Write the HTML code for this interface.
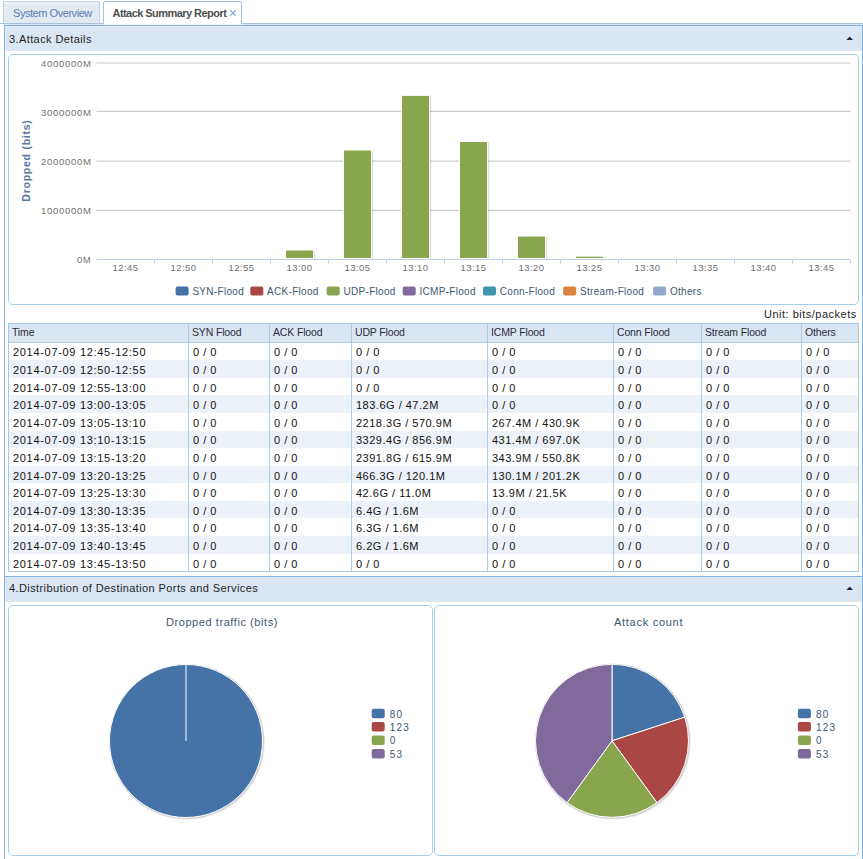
<!DOCTYPE html><html><head><meta charset="utf-8"><style>
*{margin:0;padding:0;box-sizing:border-box}
html,body{width:863px;height:859px;overflow:hidden;background:#fff;font-family:"Liberation Sans",sans-serif;position:relative}
.a{position:absolute}
.t{position:absolute;white-space:nowrap}
</style></head><body><div class="a" style="left:0;top:23px;width:863px;height:1px;background:#a6c2de"></div>
<div class="a" style="left:4px;top:24px;width:859px;height:1px;background:#dde4eb"></div>
<div class="a" style="left:104px;top:24px;width:138px;height:1px;background:#f4f7fa"></div>
<div class="a" style="left:3px;top:1px;width:97px;height:22px;background:linear-gradient(#edf2f7,#e3eaf1 4px,#e2e9f0);border:1px solid #bcd2e6;border-bottom:none;border-top-color:#c5d8ea"></div>
<div class="t" style="left:13px;top:7px;font-size:11px;color:#5a80b8;letter-spacing:-0.45px">System Overview</div>
<div class="a" style="left:103px;top:1px;width:139px;height:23px;background:#fff;border:1px solid #a3c2e2;border-bottom:none;border-radius:2px 2px 0 0"></div>
<div class="t" style="left:112.5px;top:7px;font-size:11px;font-weight:bold;color:#505050;letter-spacing:-0.55px">Attack Summary Report</div>
<div class="t" style="left:228.8px;top:4.6px;font-size:14px;color:#7fa3cf">&#215;</div>
<div class="a" style="left:4px;top:25px;width:859px;height:840px;border:1px solid #82b2e0;border-bottom:none"></div>
<div class="a" style="left:5px;top:26px;width:857px;height:25px;background:linear-gradient(#e3ebf6,#dae6f3 1.5px,#dae6f3 23px,#dfe9f5)"></div>
<div class="t" style="left:9px;top:33px;font-size:11px;color:#1f1f1f;letter-spacing:0.4px">3.Attack Details</div>
<svg class="a" style="left:846px;top:36px" width="8" height="5"><path d="M0.5 4 L3.75 0.5 L7 4 Z" fill="#15223d"/></svg>
<div class="a" style="left:8px;top:54px;width:851px;height:251px;border:1px solid #a8cde8;border-radius:5px"></div>
<svg class="a" style="left:0;top:0" width="863" height="310" font-family="Liberation Sans, sans-serif"><rect x="96.5" y="62.50" width="754.0" height="1" fill="#c4c4c4"/><rect x="96.5" y="110.90" width="754.0" height="1" fill="#c4c4c4"/><rect x="96.5" y="160.60" width="754.0" height="1" fill="#c4c4c4"/><rect x="96.5" y="209.90" width="754.0" height="1" fill="#c4c4c4"/><text x="91.5" y="66.5" text-anchor="end" font-size="9.5" fill="#707070" letter-spacing="0.7">4000000M</text><text x="91.5" y="115.6" text-anchor="end" font-size="9.5" fill="#707070" letter-spacing="0.7">3000000M</text><text x="91.5" y="164.8" text-anchor="end" font-size="9.5" fill="#707070" letter-spacing="0.7">2000000M</text><text x="91.5" y="213.9" text-anchor="end" font-size="9.5" fill="#707070" letter-spacing="0.7">1000000M</text><text x="91.5" y="263.0" text-anchor="end" font-size="9.5" fill="#707070" letter-spacing="0.7">0M</text><rect x="285.0" y="249.5" width="29" height="9.0" fill="#fff"/><rect x="314.0" y="250.5" width="1.2" height="8.0" fill="#000" opacity="0.12"/><rect x="286.0" y="250.5" width="27" height="7.5" fill="#89a54e"/><rect x="343.0" y="149.5" width="29" height="109.0" fill="#fff"/><rect x="372.0" y="150.5" width="1.2" height="108.0" fill="#000" opacity="0.12"/><rect x="344.0" y="150.5" width="27" height="107.5" fill="#89a54e"/><rect x="401.0" y="94.9" width="29" height="163.6" fill="#fff"/><rect x="430.0" y="95.9" width="1.2" height="162.6" fill="#000" opacity="0.12"/><rect x="402.0" y="95.9" width="27" height="162.1" fill="#89a54e"/><rect x="459.0" y="141.0" width="29" height="117.5" fill="#fff"/><rect x="488.0" y="142.0" width="1.2" height="116.5" fill="#000" opacity="0.12"/><rect x="460.0" y="142.0" width="27" height="116.0" fill="#89a54e"/><rect x="517.0" y="235.6" width="29" height="22.9" fill="#fff"/><rect x="546.0" y="236.6" width="1.2" height="21.9" fill="#000" opacity="0.12"/><rect x="518.0" y="236.6" width="27" height="21.4" fill="#89a54e"/><rect x="575.0" y="255.7" width="29" height="2.8" fill="#fff"/><rect x="604.0" y="256.7" width="1.2" height="1.8" fill="#000" opacity="0.12"/><rect x="576.0" y="256.7" width="27" height="1.3" fill="#89a54e"/><rect x="96.5" y="259" width="754.0" height="1" fill="#c0d0e0"/><rect x="154" y="260" width="1" height="3.5" fill="#c0d0e0"/><rect x="212" y="260" width="1" height="3.5" fill="#c0d0e0"/><rect x="270" y="260" width="1" height="3.5" fill="#c0d0e0"/><rect x="328" y="260" width="1" height="3.5" fill="#c0d0e0"/><rect x="386" y="260" width="1" height="3.5" fill="#c0d0e0"/><rect x="444" y="260" width="1" height="3.5" fill="#c0d0e0"/><rect x="502" y="260" width="1" height="3.5" fill="#c0d0e0"/><rect x="560" y="260" width="1" height="3.5" fill="#c0d0e0"/><rect x="618" y="260" width="1" height="3.5" fill="#c0d0e0"/><rect x="676" y="260" width="1" height="3.5" fill="#c0d0e0"/><rect x="734" y="260" width="1" height="3.5" fill="#c0d0e0"/><rect x="792" y="260" width="1" height="3.5" fill="#c0d0e0"/><rect x="850" y="260" width="1" height="3.5" fill="#c0d0e0"/><text x="125.5" y="271" text-anchor="middle" font-size="9.5" fill="#707070" letter-spacing="0.4">12:45</text><text x="183.5" y="271" text-anchor="middle" font-size="9.5" fill="#707070" letter-spacing="0.4">12:50</text><text x="241.5" y="271" text-anchor="middle" font-size="9.5" fill="#707070" letter-spacing="0.4">12:55</text><text x="299.5" y="271" text-anchor="middle" font-size="9.5" fill="#707070" letter-spacing="0.4">13:00</text><text x="357.5" y="271" text-anchor="middle" font-size="9.5" fill="#707070" letter-spacing="0.4">13:05</text><text x="415.5" y="271" text-anchor="middle" font-size="9.5" fill="#707070" letter-spacing="0.4">13:10</text><text x="473.5" y="271" text-anchor="middle" font-size="9.5" fill="#707070" letter-spacing="0.4">13:15</text><text x="531.5" y="271" text-anchor="middle" font-size="9.5" fill="#707070" letter-spacing="0.4">13:20</text><text x="589.5" y="271" text-anchor="middle" font-size="9.5" fill="#707070" letter-spacing="0.4">13:25</text><text x="647.5" y="271" text-anchor="middle" font-size="9.5" fill="#707070" letter-spacing="0.4">13:30</text><text x="705.5" y="271" text-anchor="middle" font-size="9.5" fill="#707070" letter-spacing="0.4">13:35</text><text x="763.5" y="271" text-anchor="middle" font-size="9.5" fill="#707070" letter-spacing="0.4">13:40</text><text x="821.5" y="271" text-anchor="middle" font-size="9.5" fill="#707070" letter-spacing="0.4">13:45</text><text transform="translate(30,160.5) rotate(-90)" text-anchor="middle" font-size="10.5" font-weight="bold" fill="#56789e" letter-spacing="0.75">Dropped (bits)</text><rect x="175.6" y="286.5" width="13" height="9" rx="2" fill="#4572a7"/><text x="192.4" y="294.8" font-size="10" fill="#3e576f" letter-spacing="0.3">SYN-Flood</text><rect x="250.3" y="286.5" width="13" height="9" rx="2" fill="#aa4643"/><text x="267.1" y="294.8" font-size="10" fill="#3e576f" letter-spacing="0.3">ACK-Flood</text><rect x="326.7" y="286.5" width="13" height="9" rx="2" fill="#89a54e"/><text x="343.5" y="294.8" font-size="10" fill="#3e576f" letter-spacing="0.3">UDP-Flood</text><rect x="402.7" y="286.5" width="13" height="9" rx="2" fill="#80699b"/><text x="419.5" y="294.8" font-size="10" fill="#3e576f" letter-spacing="0.3">ICMP-Flood</text><rect x="483.0" y="286.5" width="13" height="9" rx="2" fill="#3d96ae"/><text x="499.8" y="294.8" font-size="10" fill="#3e576f" letter-spacing="0.3">Conn-Flood</text><rect x="563.2" y="286.5" width="13" height="9" rx="2" fill="#db843d"/><text x="580.0" y="294.8" font-size="10" fill="#3e576f" letter-spacing="0.3">Stream-Flood</text><rect x="653.1" y="286.5" width="13" height="9" rx="2" fill="#92a8cd"/><text x="669.9" y="294.8" font-size="10" fill="#3e576f" letter-spacing="0.3">Others</text></svg>
<div class="t" style="left:764px;top:308px;font-size:11px;color:#1f1f1f;letter-spacing:0.5px">Unit: bits/packets</div>
<div class="a" style="left:8px;top:323px;width:851px;height:249.30px;border:1px solid #a9c8e6;"></div>
<div class="a" style="left:9px;top:324px;width:849px;height:18.50px;background:#dae6f3;border-bottom:1px solid #b4cde6"></div>
<div class="a" style="left:9px;top:342.50px;width:849px;height:17.60px;background:#fff"></div>
<div class="a" style="left:9px;top:360.10px;width:849px;height:17.60px;background:#edf2f8"></div>
<div class="a" style="left:9px;top:377.70px;width:849px;height:17.60px;background:#fff"></div>
<div class="a" style="left:9px;top:395.30px;width:849px;height:17.60px;background:#edf2f8"></div>
<div class="a" style="left:9px;top:412.90px;width:849px;height:17.60px;background:#fff"></div>
<div class="a" style="left:9px;top:430.50px;width:849px;height:17.60px;background:#edf2f8"></div>
<div class="a" style="left:9px;top:448.10px;width:849px;height:17.60px;background:#fff"></div>
<div class="a" style="left:9px;top:465.70px;width:849px;height:17.60px;background:#edf2f8"></div>
<div class="a" style="left:9px;top:483.30px;width:849px;height:17.60px;background:#fff"></div>
<div class="a" style="left:9px;top:500.90px;width:849px;height:17.60px;background:#edf2f8"></div>
<div class="a" style="left:9px;top:518.50px;width:849px;height:17.60px;background:#fff"></div>
<div class="a" style="left:9px;top:536.10px;width:849px;height:17.60px;background:#edf2f8"></div>
<div class="a" style="left:9px;top:553.70px;width:849px;height:17.60px;background:#fff"></div>
<div class="a" style="left:188px;top:324px;width:1px;height:247.30px;background:#aecde8"></div>
<div class="a" style="left:269px;top:324px;width:1px;height:247.30px;background:#aecde8"></div>
<div class="a" style="left:351px;top:324px;width:1px;height:247.30px;background:#aecde8"></div>
<div class="a" style="left:487px;top:324px;width:1px;height:247.30px;background:#aecde8"></div>
<div class="a" style="left:613px;top:324px;width:1px;height:247.30px;background:#aecde8"></div>
<div class="a" style="left:701px;top:324px;width:1px;height:247.30px;background:#aecde8"></div>
<div class="a" style="left:801px;top:324px;width:1px;height:247.30px;background:#aecde8"></div>
<div class="t" style="left:12px;top:325.8px;font-size:10.5px;color:#2b2b3b;letter-spacing:-0.15px">Time</div>
<div class="t" style="left:192px;top:325.8px;font-size:10.5px;color:#2b2b3b;letter-spacing:-0.15px">SYN Flood</div>
<div class="t" style="left:273px;top:325.8px;font-size:10.5px;color:#2b2b3b;letter-spacing:-0.15px">ACK Flood</div>
<div class="t" style="left:355px;top:325.8px;font-size:10.5px;color:#2b2b3b;letter-spacing:-0.15px">UDP Flood</div>
<div class="t" style="left:491px;top:325.8px;font-size:10.5px;color:#2b2b3b;letter-spacing:-0.15px">ICMP Flood</div>
<div class="t" style="left:617px;top:325.8px;font-size:10.5px;color:#2b2b3b;letter-spacing:-0.15px">Conn Flood</div>
<div class="t" style="left:705px;top:325.8px;font-size:10.5px;color:#2b2b3b;letter-spacing:-0.15px">Stream Flood</div>
<div class="t" style="left:805px;top:325.8px;font-size:10.5px;color:#2b2b3b;letter-spacing:-0.15px">Others</div>
<div class="t" style="left:13px;top:346.30px;font-size:11px;color:#111;letter-spacing:0.69px">2014-07-09 12:45-12:50</div>
<div class="t" style="left:193px;top:346.30px;font-size:11px;color:#111;letter-spacing:0.5px">0 / 0</div>
<div class="t" style="left:274px;top:346.30px;font-size:11px;color:#111;letter-spacing:0.5px">0 / 0</div>
<div class="t" style="left:356px;top:346.30px;font-size:11px;color:#111;letter-spacing:0.5px">0 / 0</div>
<div class="t" style="left:492px;top:346.30px;font-size:11px;color:#111;letter-spacing:0.5px">0 / 0</div>
<div class="t" style="left:618px;top:346.30px;font-size:11px;color:#111;letter-spacing:0.5px">0 / 0</div>
<div class="t" style="left:706px;top:346.30px;font-size:11px;color:#111;letter-spacing:0.5px">0 / 0</div>
<div class="t" style="left:806px;top:346.30px;font-size:11px;color:#111;letter-spacing:0.5px">0 / 0</div>
<div class="t" style="left:13px;top:363.90px;font-size:11px;color:#111;letter-spacing:0.69px">2014-07-09 12:50-12:55</div>
<div class="t" style="left:193px;top:363.90px;font-size:11px;color:#111;letter-spacing:0.5px">0 / 0</div>
<div class="t" style="left:274px;top:363.90px;font-size:11px;color:#111;letter-spacing:0.5px">0 / 0</div>
<div class="t" style="left:356px;top:363.90px;font-size:11px;color:#111;letter-spacing:0.5px">0 / 0</div>
<div class="t" style="left:492px;top:363.90px;font-size:11px;color:#111;letter-spacing:0.5px">0 / 0</div>
<div class="t" style="left:618px;top:363.90px;font-size:11px;color:#111;letter-spacing:0.5px">0 / 0</div>
<div class="t" style="left:706px;top:363.90px;font-size:11px;color:#111;letter-spacing:0.5px">0 / 0</div>
<div class="t" style="left:806px;top:363.90px;font-size:11px;color:#111;letter-spacing:0.5px">0 / 0</div>
<div class="t" style="left:13px;top:381.50px;font-size:11px;color:#111;letter-spacing:0.69px">2014-07-09 12:55-13:00</div>
<div class="t" style="left:193px;top:381.50px;font-size:11px;color:#111;letter-spacing:0.5px">0 / 0</div>
<div class="t" style="left:274px;top:381.50px;font-size:11px;color:#111;letter-spacing:0.5px">0 / 0</div>
<div class="t" style="left:356px;top:381.50px;font-size:11px;color:#111;letter-spacing:0.5px">0 / 0</div>
<div class="t" style="left:492px;top:381.50px;font-size:11px;color:#111;letter-spacing:0.5px">0 / 0</div>
<div class="t" style="left:618px;top:381.50px;font-size:11px;color:#111;letter-spacing:0.5px">0 / 0</div>
<div class="t" style="left:706px;top:381.50px;font-size:11px;color:#111;letter-spacing:0.5px">0 / 0</div>
<div class="t" style="left:806px;top:381.50px;font-size:11px;color:#111;letter-spacing:0.5px">0 / 0</div>
<div class="t" style="left:13px;top:399.10px;font-size:11px;color:#111;letter-spacing:0.69px">2014-07-09 13:00-13:05</div>
<div class="t" style="left:193px;top:399.10px;font-size:11px;color:#111;letter-spacing:0.5px">0 / 0</div>
<div class="t" style="left:274px;top:399.10px;font-size:11px;color:#111;letter-spacing:0.5px">0 / 0</div>
<div class="t" style="left:356px;top:399.10px;font-size:11px;color:#111;letter-spacing:0.5px">183.6G / 47.2M</div>
<div class="t" style="left:492px;top:399.10px;font-size:11px;color:#111;letter-spacing:0.5px">0 / 0</div>
<div class="t" style="left:618px;top:399.10px;font-size:11px;color:#111;letter-spacing:0.5px">0 / 0</div>
<div class="t" style="left:706px;top:399.10px;font-size:11px;color:#111;letter-spacing:0.5px">0 / 0</div>
<div class="t" style="left:806px;top:399.10px;font-size:11px;color:#111;letter-spacing:0.5px">0 / 0</div>
<div class="t" style="left:13px;top:416.70px;font-size:11px;color:#111;letter-spacing:0.69px">2014-07-09 13:05-13:10</div>
<div class="t" style="left:193px;top:416.70px;font-size:11px;color:#111;letter-spacing:0.5px">0 / 0</div>
<div class="t" style="left:274px;top:416.70px;font-size:11px;color:#111;letter-spacing:0.5px">0 / 0</div>
<div class="t" style="left:356px;top:416.70px;font-size:11px;color:#111;letter-spacing:0.5px">2218.3G / 570.9M</div>
<div class="t" style="left:492px;top:416.70px;font-size:11px;color:#111;letter-spacing:0.5px">267.4M / 430.9K</div>
<div class="t" style="left:618px;top:416.70px;font-size:11px;color:#111;letter-spacing:0.5px">0 / 0</div>
<div class="t" style="left:706px;top:416.70px;font-size:11px;color:#111;letter-spacing:0.5px">0 / 0</div>
<div class="t" style="left:806px;top:416.70px;font-size:11px;color:#111;letter-spacing:0.5px">0 / 0</div>
<div class="t" style="left:13px;top:434.30px;font-size:11px;color:#111;letter-spacing:0.69px">2014-07-09 13:10-13:15</div>
<div class="t" style="left:193px;top:434.30px;font-size:11px;color:#111;letter-spacing:0.5px">0 / 0</div>
<div class="t" style="left:274px;top:434.30px;font-size:11px;color:#111;letter-spacing:0.5px">0 / 0</div>
<div class="t" style="left:356px;top:434.30px;font-size:11px;color:#111;letter-spacing:0.5px">3329.4G / 856.9M</div>
<div class="t" style="left:492px;top:434.30px;font-size:11px;color:#111;letter-spacing:0.5px">431.4M / 697.0K</div>
<div class="t" style="left:618px;top:434.30px;font-size:11px;color:#111;letter-spacing:0.5px">0 / 0</div>
<div class="t" style="left:706px;top:434.30px;font-size:11px;color:#111;letter-spacing:0.5px">0 / 0</div>
<div class="t" style="left:806px;top:434.30px;font-size:11px;color:#111;letter-spacing:0.5px">0 / 0</div>
<div class="t" style="left:13px;top:451.90px;font-size:11px;color:#111;letter-spacing:0.69px">2014-07-09 13:15-13:20</div>
<div class="t" style="left:193px;top:451.90px;font-size:11px;color:#111;letter-spacing:0.5px">0 / 0</div>
<div class="t" style="left:274px;top:451.90px;font-size:11px;color:#111;letter-spacing:0.5px">0 / 0</div>
<div class="t" style="left:356px;top:451.90px;font-size:11px;color:#111;letter-spacing:0.5px">2391.8G / 615.9M</div>
<div class="t" style="left:492px;top:451.90px;font-size:11px;color:#111;letter-spacing:0.5px">343.9M / 550.8K</div>
<div class="t" style="left:618px;top:451.90px;font-size:11px;color:#111;letter-spacing:0.5px">0 / 0</div>
<div class="t" style="left:706px;top:451.90px;font-size:11px;color:#111;letter-spacing:0.5px">0 / 0</div>
<div class="t" style="left:806px;top:451.90px;font-size:11px;color:#111;letter-spacing:0.5px">0 / 0</div>
<div class="t" style="left:13px;top:469.50px;font-size:11px;color:#111;letter-spacing:0.69px">2014-07-09 13:20-13:25</div>
<div class="t" style="left:193px;top:469.50px;font-size:11px;color:#111;letter-spacing:0.5px">0 / 0</div>
<div class="t" style="left:274px;top:469.50px;font-size:11px;color:#111;letter-spacing:0.5px">0 / 0</div>
<div class="t" style="left:356px;top:469.50px;font-size:11px;color:#111;letter-spacing:0.5px">466.3G / 120.1M</div>
<div class="t" style="left:492px;top:469.50px;font-size:11px;color:#111;letter-spacing:0.5px">130.1M / 201.2K</div>
<div class="t" style="left:618px;top:469.50px;font-size:11px;color:#111;letter-spacing:0.5px">0 / 0</div>
<div class="t" style="left:706px;top:469.50px;font-size:11px;color:#111;letter-spacing:0.5px">0 / 0</div>
<div class="t" style="left:806px;top:469.50px;font-size:11px;color:#111;letter-spacing:0.5px">0 / 0</div>
<div class="t" style="left:13px;top:487.10px;font-size:11px;color:#111;letter-spacing:0.69px">2014-07-09 13:25-13:30</div>
<div class="t" style="left:193px;top:487.10px;font-size:11px;color:#111;letter-spacing:0.5px">0 / 0</div>
<div class="t" style="left:274px;top:487.10px;font-size:11px;color:#111;letter-spacing:0.5px">0 / 0</div>
<div class="t" style="left:356px;top:487.10px;font-size:11px;color:#111;letter-spacing:0.5px">42.6G / 11.0M</div>
<div class="t" style="left:492px;top:487.10px;font-size:11px;color:#111;letter-spacing:0.5px">13.9M / 21.5K</div>
<div class="t" style="left:618px;top:487.10px;font-size:11px;color:#111;letter-spacing:0.5px">0 / 0</div>
<div class="t" style="left:706px;top:487.10px;font-size:11px;color:#111;letter-spacing:0.5px">0 / 0</div>
<div class="t" style="left:806px;top:487.10px;font-size:11px;color:#111;letter-spacing:0.5px">0 / 0</div>
<div class="t" style="left:13px;top:504.70px;font-size:11px;color:#111;letter-spacing:0.69px">2014-07-09 13:30-13:35</div>
<div class="t" style="left:193px;top:504.70px;font-size:11px;color:#111;letter-spacing:0.5px">0 / 0</div>
<div class="t" style="left:274px;top:504.70px;font-size:11px;color:#111;letter-spacing:0.5px">0 / 0</div>
<div class="t" style="left:356px;top:504.70px;font-size:11px;color:#111;letter-spacing:0.5px">6.4G / 1.6M</div>
<div class="t" style="left:492px;top:504.70px;font-size:11px;color:#111;letter-spacing:0.5px">0 / 0</div>
<div class="t" style="left:618px;top:504.70px;font-size:11px;color:#111;letter-spacing:0.5px">0 / 0</div>
<div class="t" style="left:706px;top:504.70px;font-size:11px;color:#111;letter-spacing:0.5px">0 / 0</div>
<div class="t" style="left:806px;top:504.70px;font-size:11px;color:#111;letter-spacing:0.5px">0 / 0</div>
<div class="t" style="left:13px;top:522.30px;font-size:11px;color:#111;letter-spacing:0.69px">2014-07-09 13:35-13:40</div>
<div class="t" style="left:193px;top:522.30px;font-size:11px;color:#111;letter-spacing:0.5px">0 / 0</div>
<div class="t" style="left:274px;top:522.30px;font-size:11px;color:#111;letter-spacing:0.5px">0 / 0</div>
<div class="t" style="left:356px;top:522.30px;font-size:11px;color:#111;letter-spacing:0.5px">6.3G / 1.6M</div>
<div class="t" style="left:492px;top:522.30px;font-size:11px;color:#111;letter-spacing:0.5px">0 / 0</div>
<div class="t" style="left:618px;top:522.30px;font-size:11px;color:#111;letter-spacing:0.5px">0 / 0</div>
<div class="t" style="left:706px;top:522.30px;font-size:11px;color:#111;letter-spacing:0.5px">0 / 0</div>
<div class="t" style="left:806px;top:522.30px;font-size:11px;color:#111;letter-spacing:0.5px">0 / 0</div>
<div class="t" style="left:13px;top:539.90px;font-size:11px;color:#111;letter-spacing:0.69px">2014-07-09 13:40-13:45</div>
<div class="t" style="left:193px;top:539.90px;font-size:11px;color:#111;letter-spacing:0.5px">0 / 0</div>
<div class="t" style="left:274px;top:539.90px;font-size:11px;color:#111;letter-spacing:0.5px">0 / 0</div>
<div class="t" style="left:356px;top:539.90px;font-size:11px;color:#111;letter-spacing:0.5px">6.2G / 1.6M</div>
<div class="t" style="left:492px;top:539.90px;font-size:11px;color:#111;letter-spacing:0.5px">0 / 0</div>
<div class="t" style="left:618px;top:539.90px;font-size:11px;color:#111;letter-spacing:0.5px">0 / 0</div>
<div class="t" style="left:706px;top:539.90px;font-size:11px;color:#111;letter-spacing:0.5px">0 / 0</div>
<div class="t" style="left:806px;top:539.90px;font-size:11px;color:#111;letter-spacing:0.5px">0 / 0</div>
<div class="t" style="left:13px;top:557.50px;font-size:11px;color:#111;letter-spacing:0.69px">2014-07-09 13:45-13:50</div>
<div class="t" style="left:193px;top:557.50px;font-size:11px;color:#111;letter-spacing:0.5px">0 / 0</div>
<div class="t" style="left:274px;top:557.50px;font-size:11px;color:#111;letter-spacing:0.5px">0 / 0</div>
<div class="t" style="left:356px;top:557.50px;font-size:11px;color:#111;letter-spacing:0.5px">0 / 0</div>
<div class="t" style="left:492px;top:557.50px;font-size:11px;color:#111;letter-spacing:0.5px">0 / 0</div>
<div class="t" style="left:618px;top:557.50px;font-size:11px;color:#111;letter-spacing:0.5px">0 / 0</div>
<div class="t" style="left:706px;top:557.50px;font-size:11px;color:#111;letter-spacing:0.5px">0 / 0</div>
<div class="t" style="left:806px;top:557.50px;font-size:11px;color:#111;letter-spacing:0.5px">0 / 0</div>
<div class="a" style="left:5px;top:576px;width:857px;height:1px;background:#82b2e0"></div>
<div class="a" style="left:5px;top:577px;width:857px;height:25px;background:linear-gradient(#e3ebf6,#dae6f3 1.5px,#dae6f3 23px,#dfe9f5)"></div>
<div class="t" style="left:9px;top:582.4px;font-size:11px;color:#1f1f1f;letter-spacing:0.4px">4.Distribution of Destination Ports and Services</div>
<svg class="a" style="left:846px;top:586px" width="8" height="5"><path d="M0.5 4 L3.75 0.5 L7 4 Z" fill="#15223d"/></svg>
<div class="a" style="left:8px;top:605px;width:425px;height:251px;border:1px solid #a8cde8;border-radius:5px"></div>
<div class="a" style="left:434px;top:605px;width:425px;height:251px;border:1px solid #a8cde8;border-radius:5px"></div>
<div class="t" style="left:166px;top:616px;font-size:11px;color:#3e576f;letter-spacing:0.57px">Dropped traffic (bits)</div>
<div class="t" style="left:614px;top:616px;font-size:11px;color:#3e576f;letter-spacing:0.72px">Attack count</div>
<svg class="a" style="left:0;top:600px" width="863" height="259" font-family="Liberation Sans, sans-serif">
<circle cx="186.8" cy="141.8" r="78.0" fill="#000" opacity="0.07"/><circle cx="186.5" cy="141.5" r="77.5" fill="#000" opacity="0.12"/><circle cx="186.0" cy="141.0" r="76.5" fill="#4572a7" stroke="#fff" stroke-width="1"/><line x1="186.0" y1="64.5" x2="186.0" y2="141.0" stroke="#fff" stroke-width="1"/>
<circle cx="612.8" cy="141.60000000000002" r="78.0" fill="#000" opacity="0.07"/><circle cx="612.5" cy="141.3" r="77.5" fill="#000" opacity="0.12"/><path d="M612.0 140.8 L612.00 64.30 A76.5 76.5 0 0 1 684.76 117.16 Z" fill="#4572a7" stroke="#fff" stroke-width="1" stroke-linejoin="round"/><path d="M612.0 140.8 L684.76 117.16 A76.5 76.5 0 0 1 656.97 202.69 Z" fill="#aa4643" stroke="#fff" stroke-width="1" stroke-linejoin="round"/><path d="M612.0 140.8 L656.97 202.69 A76.5 76.5 0 0 1 567.03 202.69 Z" fill="#89a54e" stroke="#fff" stroke-width="1" stroke-linejoin="round"/><path d="M612.0 140.8 L567.03 202.69 A76.5 76.5 0 0 1 612.00 64.30 Z" fill="#80699b" stroke="#fff" stroke-width="1" stroke-linejoin="round"/>
<rect x="371.7" y="108.7" width="13" height="9.5" rx="2" fill="#4572a7"/>
<text x="389.7" y="117.5" font-size="10" fill="#3e576f" letter-spacing="1.2">80</text>
<rect x="371.7" y="122.1" width="13" height="9.5" rx="2" fill="#aa4643"/>
<text x="389.7" y="130.9" font-size="10" fill="#3e576f" letter-spacing="1.2">123</text>
<rect x="371.7" y="135.5" width="13" height="9.5" rx="2" fill="#89a54e"/>
<text x="389.7" y="144.3" font-size="10" fill="#3e576f" letter-spacing="1.2">0</text>
<rect x="371.7" y="148.9" width="13" height="9.5" rx="2" fill="#80699b"/>
<text x="389.7" y="157.7" font-size="10" fill="#3e576f" letter-spacing="1.2">53</text>
<rect x="797.9" y="108.7" width="13" height="9.5" rx="2" fill="#4572a7"/>
<text x="815.9" y="117.5" font-size="10" fill="#3e576f" letter-spacing="1.2">80</text>
<rect x="797.9" y="122.1" width="13" height="9.5" rx="2" fill="#aa4643"/>
<text x="815.9" y="130.9" font-size="10" fill="#3e576f" letter-spacing="1.2">123</text>
<rect x="797.9" y="135.5" width="13" height="9.5" rx="2" fill="#89a54e"/>
<text x="815.9" y="144.3" font-size="10" fill="#3e576f" letter-spacing="1.2">0</text>
<rect x="797.9" y="148.9" width="13" height="9.5" rx="2" fill="#80699b"/>
<text x="815.9" y="157.7" font-size="10" fill="#3e576f" letter-spacing="1.2">53</text>
</svg></body></html>
